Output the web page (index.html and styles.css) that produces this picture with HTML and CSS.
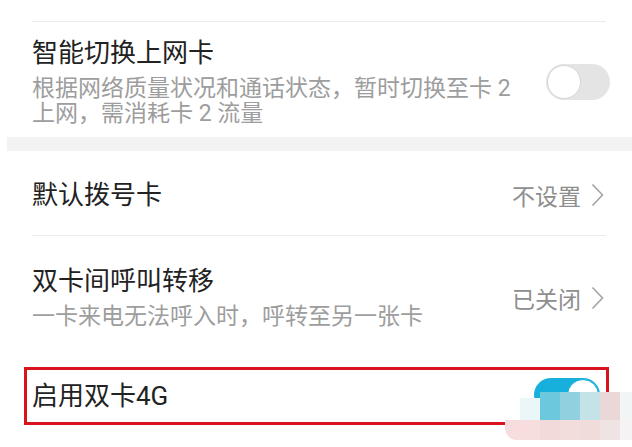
FILE: index.html
```html
<!DOCTYPE html>
<html lang="zh-CN">
<head>
  <meta charset="UTF-8" />
  <meta name="viewport" content="width=device-width, initial-scale=1.0"/>
  <title>双卡管理</title>
  <link rel="stylesheet" href="styles.css">
</head>
<body>

  <div class="top-rest"></div>

  <section class="group">
    <div class="row row-smart">
      <div class="text">
        <div class="title">智能切换上网卡</div>
        <div class="sub">根据网络质量状况和通话状态，暂时切换至卡 2 上网，需消耗卡 2 流量</div>
      </div>
      <div class="switch"><span class="knob"></span></div>
    </div>
  </section>

  <div class="band"></div>

  <section class="group">
    <div class="row row-dial">
      <div class="text">
        <div class="title">默认拨号卡</div>
      </div>
      <div class="value">不设置
        <svg class="chev" width="13" height="24" viewBox="0 0 13 24"><polyline points="1.5,1.5 11.5,12 1.5,22.5" fill="none" stroke="#a3a3a3" stroke-width="1.6"/></svg>
      </div>
    </div>

    <div class="row row-forward">
      <div class="text">
        <div class="title">双卡间呼叫转移</div>
        <div class="sub">一卡来电无法呼入时，呼转至另一张卡</div>
      </div>
      <div class="value">已关闭
        <svg class="chev" width="13" height="24" viewBox="0 0 13 24"><polyline points="1.5,1.5 11.5,12 1.5,22.5" fill="none" stroke="#a3a3a3" stroke-width="1.6"/></svg>
      </div>
    </div>

    <div class="row row-4g">
      <div class="text">
        <div class="title">启用双卡4G</div>
      </div>
      <div class="switch on"><span class="knob"></span></div>
    </div>
  </section>

  <!-- pixelated watermark over the bottom right corner -->
  <div class="mosaic">
    <span style="left:15px;top:6px;height:22px;background:#eaf6f8"></span>
    <span style="left:35px;top:0;background:#6cc8dd"></span>
    <span style="left:55px;top:0;background:#91d1df"></span>
    <span style="left:75px;top:0;background:#c3e3e7"></span>
    <span style="left:95px;top:0;background:#ead7d7"></span>
    <span style="left:115px;top:0;background:#f2f5f6"></span>
    <span class="low first" style="left:0;width:35px;background:#f7dddd"></span>
    <span class="low" style="left:35px;background:#f3dada"></span>
    <span class="low" style="left:55px;background:#f3dcdc"></span>
    <span class="low" style="left:75px;background:#f1dcdc"></span>
    <span class="low" style="left:95px;background:#f0e3e3"></span>
    <span class="low" style="left:115px;background:#f5f3f3"></span>
  </div>

</body>
</html>
```

FILE: styles.css
```css
* {
  box-sizing: border-box;
}

body {
  margin: 0;
  width: 632px;
  height: 447px;
  overflow: hidden;
  background: #fff;
  font-family: "Roboto", "Noto Sans CJK SC", sans-serif;
  color: #222;
  position: relative;
}

.top-rest {
  height: 21px;
}

.group {
  padding: 0 26px 0 32px;
}

.row {
  display: flex;
  align-items: center;
  justify-content: space-between;
  border-top: 1px solid #ebebeb;
}

.title {
  font-size: 26px;
  line-height: 30px;
  color: #222;
}

.sub {
  font-size: 23px;
  line-height: 25px;
  color: #9d9d9d;
  margin-top: 8px;
}

.row-smart {
  padding: 16px 0 11px;
}

.row-smart .sub {
  max-width: 490px;
}

.row-dial {
  border-top: none;
  padding: 27px 0 23px;
}

.row-forward {
  padding: 30px 0 27px;
}

.row-4g {
  margin: 11px -3px 0 -8px;
  height: 58px;
  padding: 0 0 0 5px;
  border: 3px solid #d8141c;
}

.value {
  display: flex;
  align-items: center;
  gap: 10px;
  font-size: 23px;
  color: #8e8e8e;
  margin-right: 2px;
}

.chev {
  display: block;
}

.band {
  height: 14px;
  margin-left: 7px;
  background: #f2f2f2;
}

.switch {
  width: 64px;
  height: 36px;
  border-radius: 18px;
  background: #e4e4e4;
  position: relative;
  flex-shrink: 0;
  margin: 0 -4px 0 0;
}

.switch .knob {
  position: absolute;
  left: 1px;
  top: 1px;
  width: 34px;
  height: 34px;
  border-radius: 50%;
  background: #fff;
  border: 1px solid #d6d6d6;
}

.switch.on {
  width: 66px;
  height: 34px;
  background: #17b0dc;
  margin: 8px 6px 0 0;
  align-self: flex-start;
}

.switch.on .knob {
  left: auto;
  right: 1px;
  width: 32px;
  height: 32px;
  border: 1px solid #17b0dc;
}

.mosaic {
  position: absolute;
  left: 505px;
  top: 392px;
  width: 127px;
  height: 48px;
}

.mosaic span {
  position: absolute;
  width: 20px;
  height: 28px;
}

.mosaic .low {
  top: 28px;
  height: 20px;
}

.mosaic .first {
  border-bottom-left-radius: 12px;
}
```
